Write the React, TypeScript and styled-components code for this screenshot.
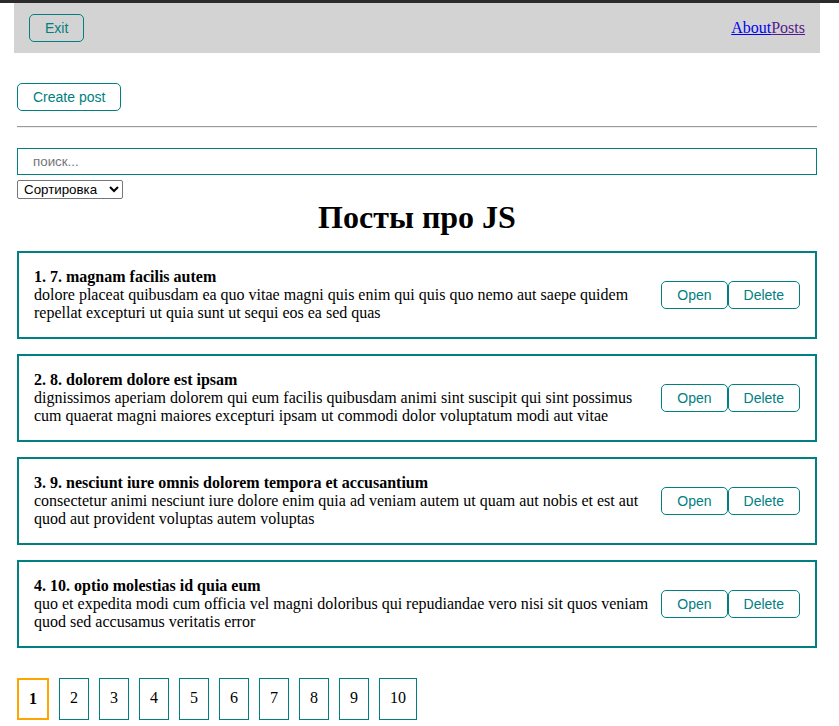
import React from "react";
import styled, { createGlobalStyle } from "styled-components";

const GlobalStyle = createGlobalStyle`
  * { box-sizing: border-box; }
  body {
    margin: 0;
    font-family: "Liberation Serif", "Times New Roman", serif;
    font-size: 16px;
    color: #000;
    background: #fff;
  }
`;

const TopStrip = styled.div`
  height: 3px;
  background: #2b2b2b;
`;

const Navbar = styled.nav`
  margin-left: 14px;
  width: 806px;
  height: 50px;
  background: lightgray;
  display: flex;
  align-items: center;
  padding: 0 15px;
`;

const NavLinks = styled.div`
  margin-left: auto;
  display: flex;
`;

const NavLink = styled.a<{ $visited?: boolean }>`
  color: ${(p) => (p.$visited ? "#551a8b" : "#0000ee")};
  text-decoration: underline;
  cursor: pointer;
`;

const Button = styled.button`
  padding: 5px 15px;
  color: teal;
  font-family: "Liberation Sans", Arial, sans-serif;
  font-size: 14px;
  line-height: 16px;
  background: transparent;
  border: 1px solid teal;
  border-radius: 5px;
  cursor: pointer;
`;

const App = styled.div`
  width: 800px;
  margin-left: 17px;
`;

const CreateButton = styled(Button)`
  margin-top: 30px;
`;

const Divider = styled.hr`
  margin: 15px 0;
  border: none;
  border-top: 1px solid #9a9a9a;
  border-bottom: 1px solid #eeeeee;
`;

const SearchInput = styled.input`
  display: inline-block;
  width: 100%;
  padding: 5px 15px;
  margin: 5px 0;
  border: 1px solid teal;
  font-family: "Liberation Sans", Arial, sans-serif;
  font-size: 13.33px;
  line-height: 15px;
  outline: none;
  &::placeholder { color: #757575; }
`;

const SortSelect = styled.select`
  font-family: "Liberation Sans", Arial, sans-serif;
  font-size: 13.33px;
  width: 106px;
  height: 19px;
  padding: 0 0 0 2px;
  border: 1px solid #767676;
  border-radius: 2px;
  background: #fff;
  color: #000;
`;

const Title = styled.h1`
  margin: 0;
  text-align: center;
  font-size: 32px;
  line-height: 37px;
  font-weight: bold;
`;

const PostCard = styled.div`
  display: flex;
  justify-content: space-between;
  align-items: center;
  padding: 15px;
  border: 2px solid teal;
  margin-top: 15px;
`;

const PostContent = styled.div`
  line-height: 18px;
`;

const PostButtons = styled.div`
  display: flex;
  flex-shrink: 0;
`;

const PageWrapper = styled.div`
  margin-top: 30px;
  display: flex;
`;

const Page = styled.span<{ $current?: boolean }>`
  padding: 10px;
  margin-right: 10px;
  line-height: 18px;
  border: ${(p) => (p.$current ? "2px solid orange" : "1px solid teal")};
  font-weight: ${(p) => (p.$current ? "bold" : "normal")};
  cursor: pointer;
`;

const posts = [
  {
    id: 7,
    title: "magnam facilis autem",
    body: "dolore placeat quibusdam ea quo vitae magni quis enim qui quis quo nemo aut saepe quidem repellat excepturi ut quia sunt ut sequi eos ea sed quas",
  },
  {
    id: 8,
    title: "dolorem dolore est ipsam",
    body: "dignissimos aperiam dolorem qui eum facilis quibusdam animi sint suscipit qui sint possimus cum quaerat magni maiores excepturi ipsam ut commodi dolor voluptatum modi aut vitae",
  },
  {
    id: 9,
    title: "nesciunt iure omnis dolorem tempora et accusantium",
    body: "consectetur animi nesciunt iure dolore enim quia ad veniam autem ut quam aut nobis et est aut quod aut provident voluptas autem voluptas",
  },
  {
    id: 10,
    title: "optio molestias id quia eum",
    body: "quo et expedita modi cum officia vel magni doloribus qui repudiandae vero nisi sit quos veniam quod sed accusamus veritatis error",
  },
];

const pages = [1, 2, 3, 4, 5, 6, 7, 8, 9, 10];

export default function AppRoot() {
  return (
    <>
      <GlobalStyle />
      <TopStrip />
      <Navbar>
        <Button>Exit</Button>
        <NavLinks>
          <NavLink href="#about">About</NavLink>
          <NavLink $visited href="#posts">Posts</NavLink>
        </NavLinks>
      </Navbar>
      <App>
        <CreateButton>Create post</CreateButton>
        <Divider />
        <div>
          <SearchInput placeholder="поиск..." />
          <SortSelect defaultValue="">
            <option value="" disabled>
              Сортировка
            </option>
            <option value="title">По названию</option>
            <option value="body">По описанию</option>
          </SortSelect>
        </div>
        <Title>Посты про JS</Title>
        {posts.map((post, i) => (
          <PostCard key={post.id}>
            <PostContent>
              <strong>
                {i + 1}. {post.id}. {post.title}
              </strong>
              <div>{post.body}</div>
            </PostContent>
            <PostButtons>
              <Button>Open</Button>
              <Button>Delete</Button>
            </PostButtons>
          </PostCard>
        ))}
        <PageWrapper>
          {pages.map((p) => (
            <Page key={p} $current={p === 1}>
              {p}
            </Page>
          ))}
        </PageWrapper>
      </App>
    </>
  );
}
